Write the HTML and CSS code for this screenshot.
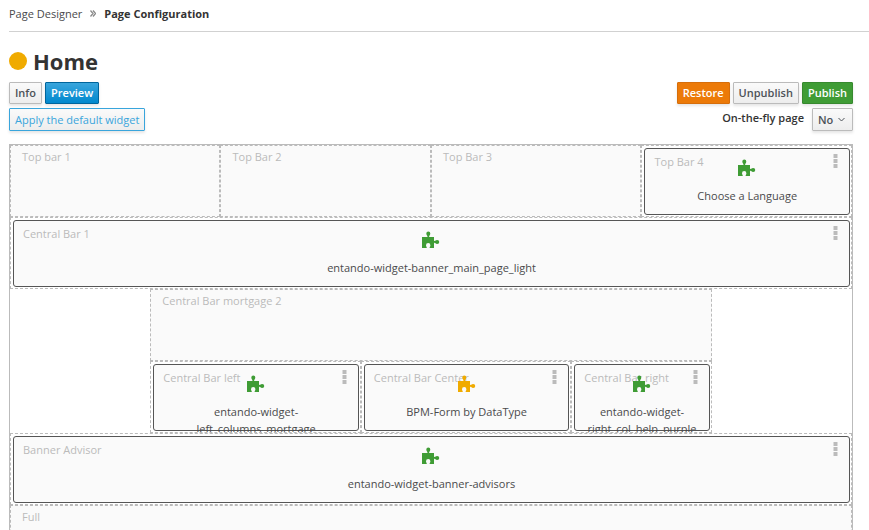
FILE: index.html
```html
<!DOCTYPE html>
<html lang="en">
<head>
<meta charset="utf-8">
<title>Page Configuration</title>
<link rel="stylesheet" href="styles.css">
</head>
<body>
<svg class="sprite" aria-hidden="true">
  <symbol id="puzzle" viewBox="0 0 18 17">
    <path d="M0 6h4.800c.8 0 .9-.6.400-1.300C4.700 4.200 4.300 3.500 4.300 2.500a2 2 0 0 1 4 0c0 1-.4 1.700-.9 2.200-.5.700-.4 1.300.4 1.300H12v3.300c0 .9.500 1 1.200.5.500-.5 1.100-.9 2-.9a2.050 2.050 0 0 1 0 4.100c-.9 0-1.500-.4-2-.9-.7-.5-1.200-.4-1.200.5V17H8.200c-.6 0-.8-.5-.4-1.100.3-.5.600-.9.600-1.600a2.200 2.200 0 0 0-4.400 0c0 .7.300 1.100.6 1.600.4.600.2 1.100-.4 1.100H0z"/>
  </symbol>
  <symbol id="kebab" viewBox="0 0 5 14">
    <path d="M.5 0h4v4h-4zM.5 5h4v4h-4zM.5 10h4v4h-4z"/>
  </symbol>
</svg>

<nav class="breadcrumb" aria-label="Breadcrumb">
  <a href="#">Page Designer</a>
  <svg class="separator" viewBox="0 0 6 7" aria-hidden="true"><path d="M.5.500l2.500 3-2.500 3M3 .5l2.500 3-2.500 3"/></svg>
  <strong>Page Configuration</strong>
</nav>

<main class="content">
  <h1 class="title"><span class="status"></span>Home</h1>

  <div class="toolbar">
    <div class="group">
      <button class="btn" type="button">Info</button>
      <button class="btn primary" type="button">Preview</button>
    </div>
    <div class="group">
      <button class="btn warning" type="button">Restore</button>
      <button class="btn" type="button">Unpublish</button>
      <button class="btn success" type="button">Publish</button>
    </div>
  </div>
  <div class="toolbar">
    <button class="btn outline" type="button">Apply the default widget</button>
    <div class="fly">
      <label for="fly">On-the-fly page</label>
      <div class="picker">
        <select id="fly"><option>No</option></select>
        <svg viewBox="0 0 7 5" aria-hidden="true"><path d="M.5 1l3 3 3-3"/></svg>
      </div>
    </div>
  </div>

  <div class="grid">
    <section class="cell span3"><h2>Top bar 1</h2></section>
    <section class="cell span3"><h2>Top Bar 2</h2></section>
    <section class="cell span3"><h2>Top Bar 3</h2></section>
    <section class="cell span3 filled">
      <div class="widget"><h2>Top Bar 4</h2>
        <button class="menu" type="button" aria-label="Actions"><svg><use href="#kebab"/></svg></button>
        <svg class="icon"><use href="#puzzle"/></svg><p>Choose a Language</p></div>
    </section>
    <section class="cell span12 filled">
      <div class="widget"><h2>Central Bar 1</h2>
        <button class="menu" type="button" aria-label="Actions"><svg><use href="#kebab"/></svg></button>
        <svg class="icon"><use href="#puzzle"/></svg><p>entando-widget-banner_main_page_light</p></div>
    </section>
    <section class="cell middle"><h2>Central Bar mortgage 2</h2></section>
    <section class="cell left filled">
      <div class="widget"><h2>Central Bar left</h2>
        <button class="menu" type="button" aria-label="Actions"><svg><use href="#kebab"/></svg></button>
        <svg class="icon"><use href="#puzzle"/></svg><p>entando-widget-<br>left_columns_mortgage</p></div>
    </section>
    <section class="cell span3 filled">
      <div class="widget"><h2>Central Bar Center</h2>
        <button class="menu" type="button" aria-label="Actions"><svg><use href="#kebab"/></svg></button>
        <svg class="icon draft"><use href="#puzzle"/></svg><p>BPM-Form by DataType</p></div>
    </section>
    <section class="cell span2 filled">
      <div class="widget"><h2>Central Bar right</h2>
        <button class="menu" type="button" aria-label="Actions"><svg><use href="#kebab"/></svg></button>
        <svg class="icon"><use href="#puzzle"/></svg><p>entando-widget-<br>right_col_help_purple</p></div>
    </section>
    <section class="cell span12 filled">
      <div class="widget"><h2>Banner Advisor</h2>
        <button class="menu" type="button" aria-label="Actions"><svg><use href="#kebab"/></svg></button>
        <svg class="icon"><use href="#puzzle"/></svg><p>entando-widget-banner-advisors</p></div>
    </section>
    <section class="cell span12"><h2>Full</h2></section>
  </div>
</main>
</body>
</html>
```
FILE: styles.css
```css
* {
  box-sizing: border-box;
}

body {
  margin: 0;
  background: #fff;
  color: #4a4a4c;
  font: 11px/17px "Open Sans", sans-serif;
}

h1, h2, p {
  margin: 0;
}

.sprite {
  position: absolute;
  width: 0;
  height: 0;
}

.breadcrumb {
  display: flex;
  align-items: center;
  gap: 8px;
  margin-left: 9px;
  padding: 5px 0 9px;
  border-bottom: 1px solid #d1d1d1;
}

.breadcrumb a {
  color: #4a4a4c;
  text-decoration: none;
}

.breadcrumb strong {
  color: #333;
  font-weight: 700;
}

.separator {
  width: 6px;
  height: 7px;
  fill: none;
  stroke: #8b8b8b;
  stroke-width: 1.3;
}

.content {
  padding: 16px 16px 0 9px;
}

.title {
  display: flex;
  align-items: center;
  gap: 6px;
  margin-bottom: 8px;
  color: #333;
  font-size: 22px;
  font-weight: 700;
  line-height: 26px;
}

.status {
  width: 18px;
  height: 18px;
  border-radius: 50%;
  background: #f0ab00;
}

.toolbar {
  display: flex;
  justify-content: space-between;
  margin-bottom: 4px;
}

.group {
  display: flex;
  gap: 3px;
}

.btn {
  height: 22px;
  padding: 0 5px;
  border: 1px solid #bbb;
  border-radius: 1px;
  background: linear-gradient(#fafafa, #ededed);
  box-shadow: 0 2px 3px rgba(3, 3, 3, 0.1);
  color: #4d5258;
  font: 600 11px/18px "Open Sans", sans-serif;
}

.primary {
  border-color: #00659c;
  background: linear-gradient(#39a5dc, #0088ce);
  color: #fff;
}

.warning {
  border-color: #d66e0b;
  background: #ec7a08;
  color: #fff;
}

.success {
  border-color: #37892f;
  background: #3f9c35;
  color: #fff;
}

.outline {
  height: 23px;
  border-color: #39a5dc;
  color: #39a5dc;
  font-weight: 400;
}

.fly {
  display: flex;
  gap: 8px;
}

.fly label {
  padding-top: 1px;
  color: #333;
  font-weight: 600;
}

.picker {
  display: grid;
  align-items: center;
  justify-items: end;
}

.picker > * {
  grid-area: 1 / 1;
}

.picker select {
  appearance: none;
  height: 23px;
  padding: 0 18px 0 5px;
  border: 1px solid #bbb;
  border-radius: 1px;
  background: linear-gradient(#fafafa, #ededed);
  box-shadow: 0 2px 3px rgba(3, 3, 3, 0.1);
  color: #4d5258;
  font: 600 11px/18px "Open Sans", sans-serif;
}

.picker svg {
  width: 7px;
  height: 5px;
  margin-right: 8px;
  fill: none;
  stroke: #4d5258;
  pointer-events: none;
}

.grid {
  display: grid;
  grid-template-columns: repeat(12, 1fr);
  grid-auto-rows: 72px;
  margin-top: 13px;
  border: 1px solid #bbb;
}

.cell {
  min-width: 0;
  padding: 2px 11px;
  overflow: hidden;
  border: 1px dashed #bbb;
  background: #fafafa;
}

.span2 { grid-column: span 2; }
.span3 { grid-column: span 3; }
.span12 { grid-column: span 12; }
.middle { grid-column: 3 / span 8; }
.left { grid-column: 3 / span 3; }

.cell h2 {
  color: #bbb;
  font-size: 11px;
  font-weight: 400;
}

.filled {
  padding: 2px 1px 2px 2px;
  background: #fff;
}

.widget {
  position: relative;
  height: 67px;
  padding: 10px 0 0;
  border: 1px solid #555;
  border-radius: 3px;
  background: #fafafa;
  text-align: center;
}

.widget h2 {
  position: absolute;
  top: 4px;
  left: 9px;
}

.menu {
  position: absolute;
  top: 5px;
  right: 11px;
  padding: 0;
  border: 0;
  background: none;
}

.menu svg {
  display: block;
  width: 5px;
  height: 14px;
  fill: #bbb;
}

.icon {
  position: relative;
  display: block;
  width: 18px;
  height: 17px;
  margin: 0 auto 11px;
  fill: #3f9c35;
}

.draft {
  fill: #f0ab00;
}
```
